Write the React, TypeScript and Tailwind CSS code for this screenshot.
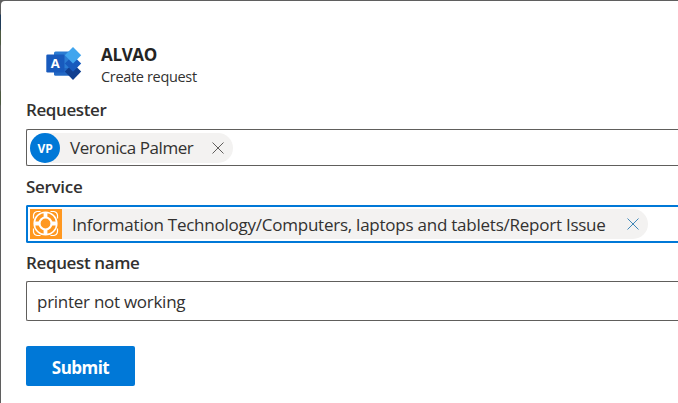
import type { ReactNode } from "react";

function AlvaoLogo() {
  return (
    <svg width="36" height="34" viewBox="0 0 36 34" className="shrink-0">
      <rect x="8" y="4.500" width="20" height="24" rx="1.5" fill="#2b7cd3" />
      <path d="M8 21h20v7.500H9.500q-1.500 0-1.500-1.500z" fill="#2368c4" />
      <path d="M27 16.500l8.200 8-8.200 8.500-8.200-8.500z" fill="#103f91" />
      <path d="M27 8.500l8.200 8-8.200 8.200-8.200-8.200z" fill="#185abd" />
      <path d="M27 0l8.200 8.300-8.200 8.300-8.200-8.300z" fill="#41a5ee" />
      <rect x=".3" y="7.500" width="18.2" height="18" rx="1.3" fill="#185abd" />
      <text x="9.2" y="21" textAnchor="middle" fontSize="13" fontWeight="700" fill="#fff" fontFamily="Open Sans, sans-serif">A</text>
    </svg>
  );
}

function LifebuoyIcon() {
  return (
    <svg width="32" height="30" viewBox="0 0 32 30" className="shrink-0">
      <rect width="32" height="30" fill="#ff9820" />
      <g fill="none" stroke="#fff">
        <circle cx="15.500" cy="14.500" r="11.300" strokeWidth="1.600" />
        <circle cx="15.500" cy="14.500" r="6" strokeWidth="2.200" />
        <path d="M15.500 3v6M15.500 20v6M4 14.500h6M21 14.500h6" strokeWidth="3.800" />
        <path d="M3.500 9.500V6Q4 3 7 2.500h3.500M20.500 2.500H24q3 .5 3.500 3.500v3.500M27.500 19.500V23q-.5 3-3.500 3.500h-3.500M10.500 26.500H7Q4 26 3.500 23v-3.500" strokeWidth="1.200" />
      </g>
    </svg>
  );
}

function Cross({ className }: { className: string }) {
  return (
    <svg width="12" height="12" viewBox="0 0 12 12" className={className}>
      <path d="M.5.500l11 11M11.500.500l-11 11" fill="none" stroke="currentColor" strokeWidth="1" />
    </svg>
  );
}

function Label({ children, className }: { children: ReactNode; className: string }) {
  return <div className={`h-6 text-[17px] leading-6 font-semibold whitespace-nowrap ${className}`}>{children}</div>;
}

export default function App() {
  return (
    <div className="h-[403px] w-[678px] overflow-hidden bg-[linear-gradient(to_bottom,#5f5f5f_14px,#203b58_15px,#203b58_29px,#4c5940_31px,#4c5940_44px,#5f5f5f_46px,#5f5f5f_90px,#4c5940_92px,#4c5940_104px,#5f5f5f_106px)] pt-px pl-px font-['Open_Sans',sans-serif] text-[#323130]">
      <main className="flex h-[402px] flex-col rounded-tl-[4px] bg-white pl-[25px]">
        <header className="flex h-[97px] pt-[42px] pl-5">
          <div className="pt-[4px]"><AlvaoLogo /></div>
          <div className="pl-[19px] whitespace-nowrap">
            <div className="h-6 text-[17px] leading-6 font-bold tracking-[-0.35px] text-[#242424]">ALVAO</div>
            <div className="h-5 text-[14.500px] leading-5 tracking-[-0.33px]">Create request</div>
          </div>
        </header>

        <Label className="tracking-[-0.4px]">Requester</Label>
        <div className="mt-[7px] h-[37px] shrink-0 rounded-l-[2px] border border-r-0 border-[#605e5c] pt-[3px] pl-[3px]">
          <div className="flex h-[30px] w-[203px] items-center rounded-full bg-[#f3f2f1]">
            <span className="flex size-[30px] items-center justify-center rounded-full bg-[#0078d7] pt-px text-[12px] font-bold tracking-[-0.2px] text-white">VP</span>
            <span className="w-[143px] pl-[10px] text-[17px] tracking-[-0.43px] whitespace-nowrap">Veronica Palmer</span>
            <Cross className="ml-[9px] text-[#605e5c]" />
          </div>
        </div>

        <Label className="mt-[9px] tracking-[-0.3px]">Service</Label>
        <div className="mt-[6px] h-[38px] shrink-0 rounded-l-[2px] border-2 border-r-0 border-[#0078d7] pt-[2px] pl-[2px]">
          <div className="flex h-[30px] w-[618px] items-center rounded-r-full bg-[#f3f2f1]">
            <LifebuoyIcon />
            <span className="w-[565px] pt-px pl-[10px] text-[17px] tracking-[-0.24px] whitespace-nowrap">Information Technology/Computers, laptops and tablets/Report Issue</span>
            <Cross className="mr-[9px] shrink-0 text-[#3f87b8]" />
          </div>
        </div>

        <Label className="mt-[8px] tracking-[-0.37px]">Request name</Label>
        <div className="mt-[6px] flex h-10 shrink-0 items-center rounded-l-[2px] border border-r-0 border-[#605e5c] pt-[2px] pl-[10px] text-[17px] tracking-[-0.27px]">printer not working</div>

        <button className="mt-[25px] h-10 w-[109px] shrink-0 rounded-[2px] bg-[#0078d7] pt-[4px] text-[17px] font-bold tracking-[-0.55px] text-white">Submit</button>
      </main>
    </div>
  );
}
